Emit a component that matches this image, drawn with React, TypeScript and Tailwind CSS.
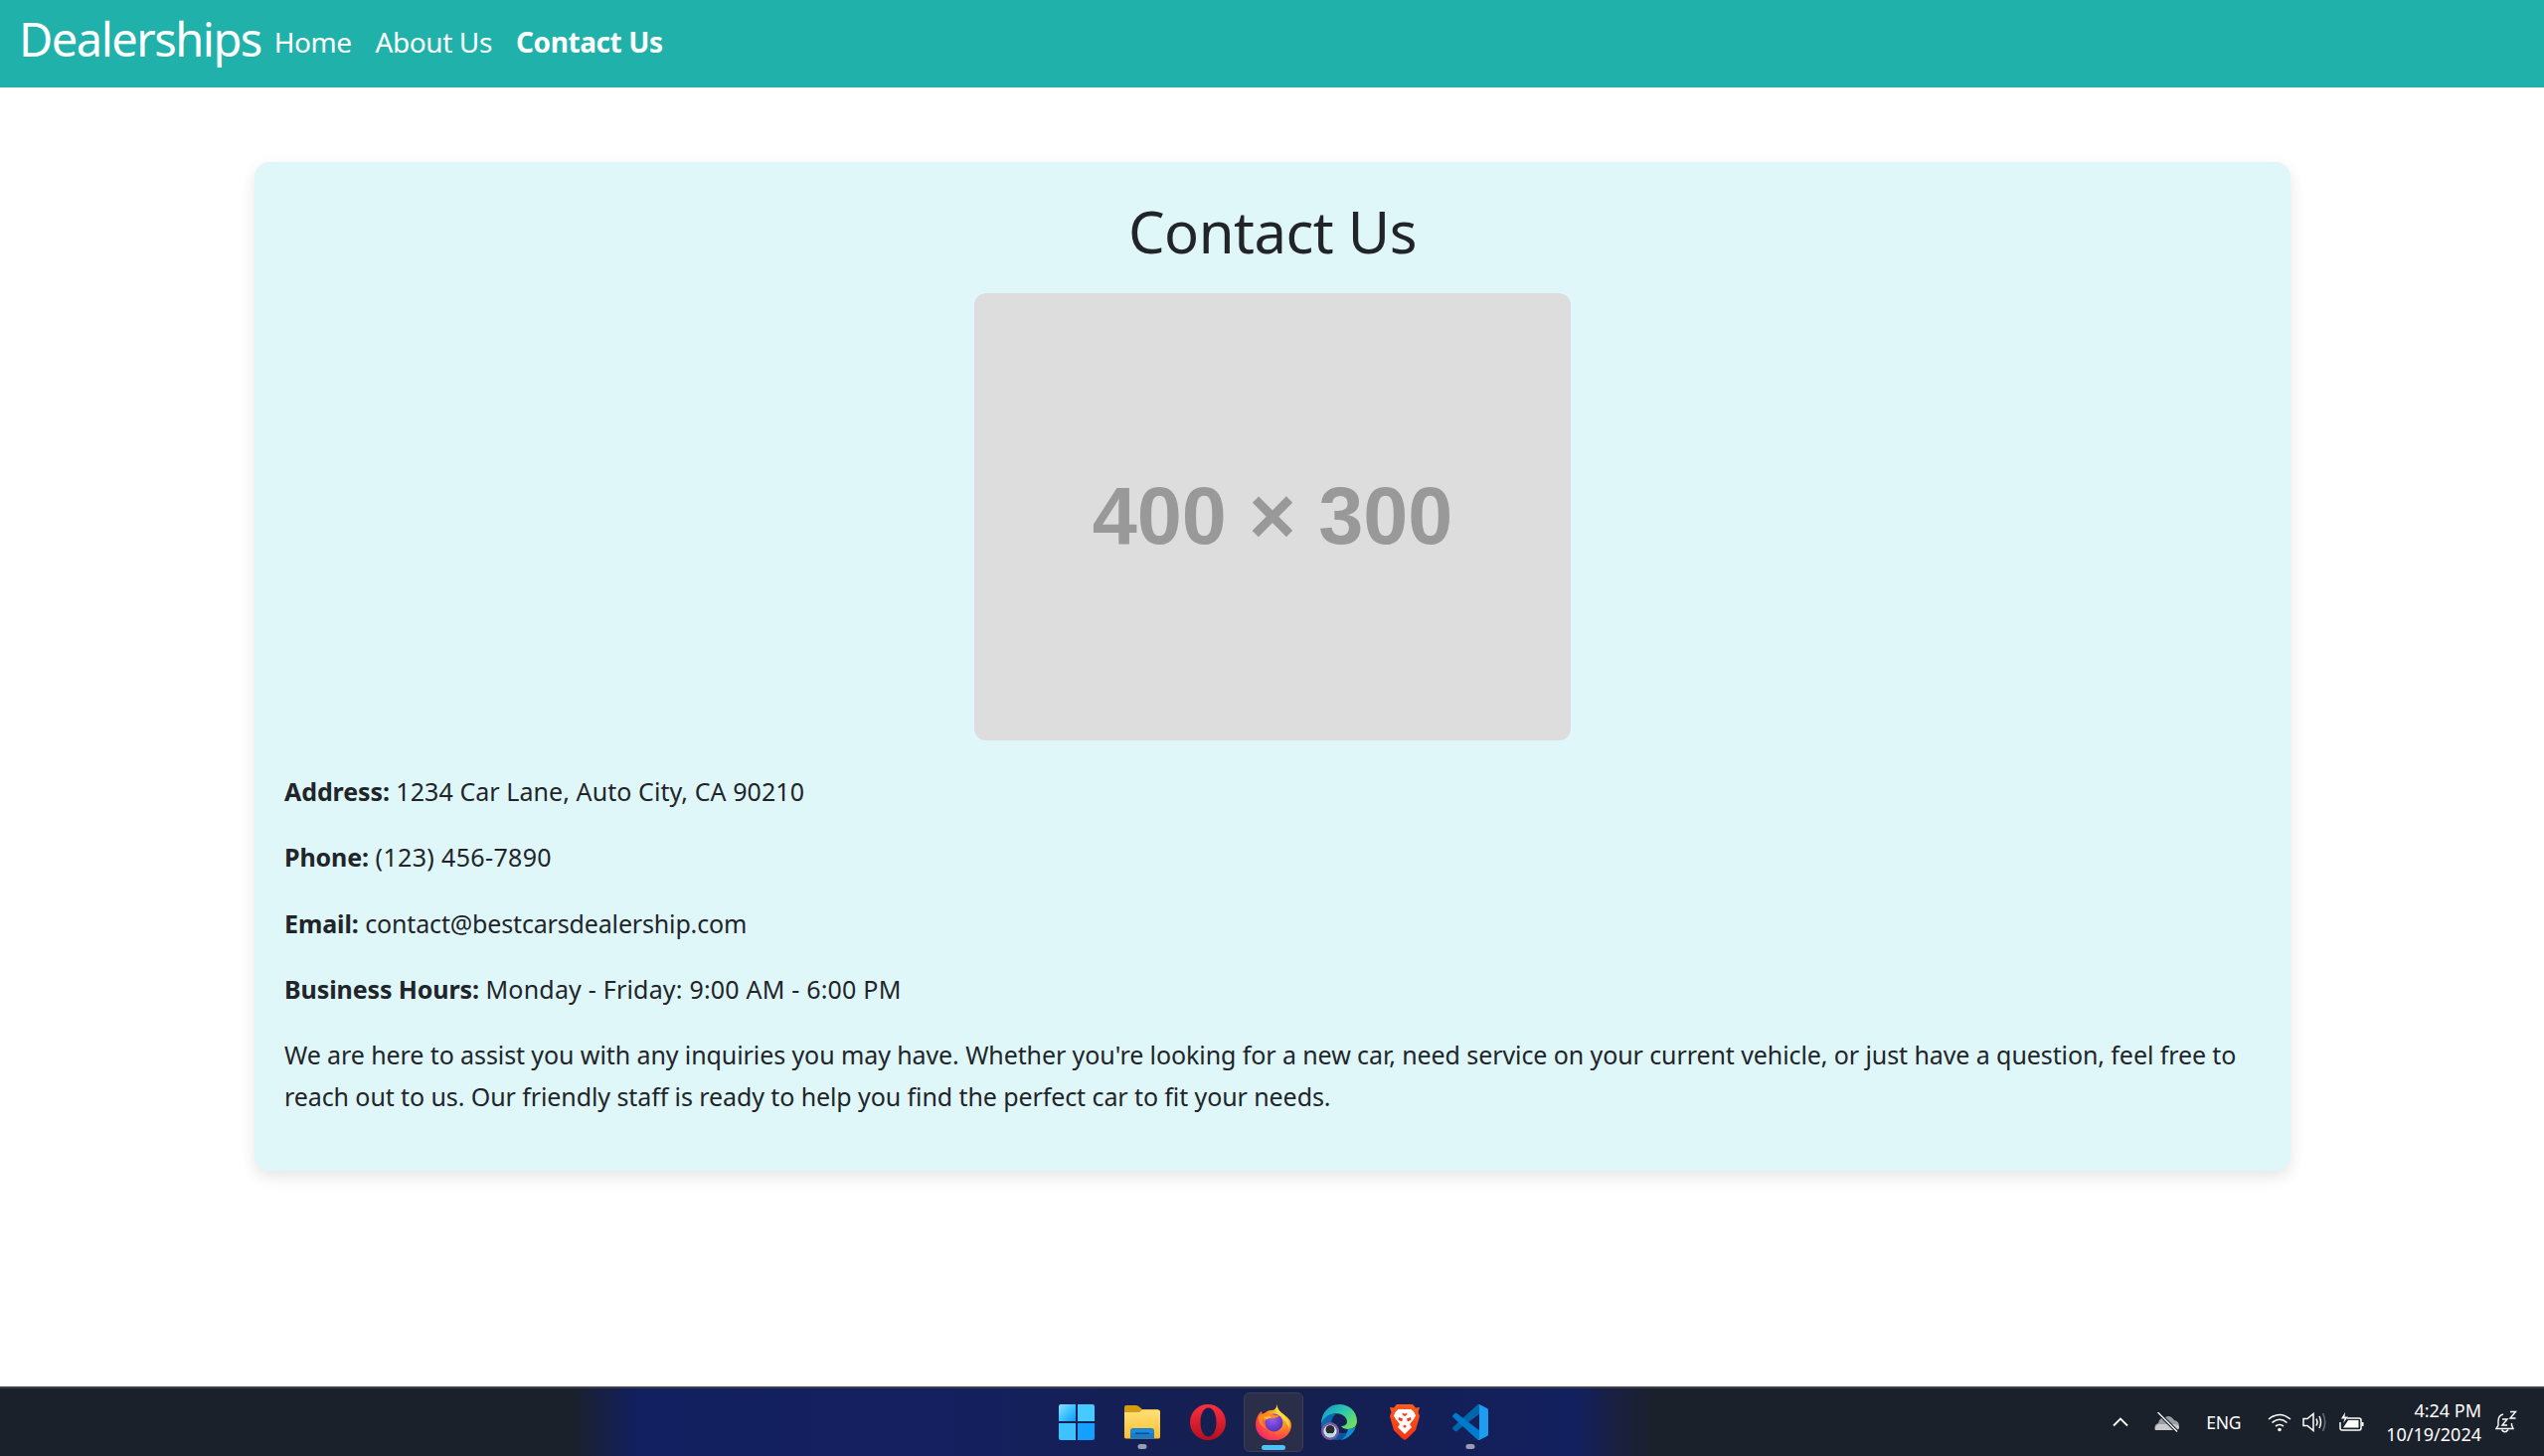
import React from 'react';

const WindowsIcon = () => (
  <svg width="36" height="36" viewBox="0 0 36 36">
    <defs>
      <linearGradient id="win" x1="0" y1="0" x2="1" y2="1">
        <stop offset="0" stopColor="#8fdcff" />
        <stop offset="0.5" stopColor="#3fc4ff" />
        <stop offset="1" stopColor="#0f9bff" />
      </linearGradient>
    </defs>
    <path d="M2 0H17V17H0V2A2 2 0 0 1 2 0Z" fill="url(#win)" />
    <path d="M19 0H34A2 2 0 0 1 36 2V17H19Z" fill="#45cbff" />
    <path d="M0 19H17V36H2A2 2 0 0 1 0 34Z" fill="#3cc3ff" />
    <path d="M19 19H36V34A2 2 0 0 1 34 36H19Z" fill="#14a0ff" />
  </svg>
);

const FolderIcon = () => (
  <svg width="36" height="34" viewBox="0 0 36 34">
    <defs>
      <linearGradient id="fold" x1="0" y1="0" x2="0" y2="1">
        <stop offset="0" stopColor="#ffe07a" />
        <stop offset="1" stopColor="#fcbf2c" />
      </linearGradient>
    </defs>
    <path d="M0 2Q0 0 2 0H12Q13.5 0 15 1.5L18 4H34V9H0Z" fill="#d29e10" />
    <path d="M0 7H15L18 4.500H34Q36 4.500 36 6.500V32Q36 33.500 34 33.500H2Q0 33.500 0 32Z" fill="url(#fold)" />
    <path d="M6 33.500V26Q6 23 9 23H27Q30 23 30 26V33.500Z" fill="#1a7ccd" />
    <path d="M6 33.500V27Q6 24 9 24H27Q30 24 30 27V28H6Z" fill="#1f96e8" opacity="0.6" />
    <rect x="11" y="27.500" width="14" height="1.500" fill="#0b4f8c" />
  </svg>
);

const OperaIcon = () => (
  <svg width="36" height="36" viewBox="0 0 36 36">
    <defs>
      <linearGradient id="op" x1="0" y1="0" x2="0" y2="1">
        <stop offset="0" stopColor="#ff2f3f" />
        <stop offset="1" stopColor="#b40f1e" />
      </linearGradient>
    </defs>
    <path
      fillRule="evenodd"
      d="M18 0A18 18 0 1 1 18 36A18 18 0 1 1 18 0ZM18.500 3.500C13.500 3.500 10.500 10 10.500 18C10.500 26 13.500 32.500 18.500 32.500C23.500 32.500 26.500 26 26.500 18C26.500 10 23.500 3.500 18.500 3.500Z"
      fill="url(#op)"
    />
  </svg>
);

const FirefoxIcon = () => (
  <svg width="36" height="36" viewBox="0 0 36 36">
    <defs>
      <radialGradient id="ff" cx="0.75" cy="0.2" r="1">
        <stop offset="0" stopColor="#ffe14a" />
        <stop offset="0.35" stopColor="#ff9a1f" />
        <stop offset="0.7" stopColor="#ff4a45" />
        <stop offset="1" stopColor="#e3177b" />
      </radialGradient>
      <radialGradient id="fg" cx="0.4" cy="0.3" r="0.8">
        <stop offset="0" stopColor="#9a5cf0" />
        <stop offset="1" stopColor="#4b2bb5" />
      </radialGradient>
    </defs>
    <path d="M22 0C21 4 24 7 28 10C32 13 36 16 36 21A18 15.500 0 0 1 0 21C0 15 2 10 6 7L7 11C9 8 12 6 16 6C19 6 21 4 22 0Z" fill="url(#ff)" />
    <path d="M22 0C21 5 25 8 29 11C33 15 35 19 34 25C32 18 27 13 23 11C20 8 20 4 22 0Z" fill="#ffd83a" />
    <circle cx="18.500" cy="18.500" r="9" fill="url(#fg)" />
    <path d="M3 12C6 9 11 8 16 10C20 11.500 22 10.500 24 12C20 14 17 14.500 13 14C11 16 9 16 7 15C6 18 8 22 11 24C6 23 2 18 3 12Z" fill="#ff8a1c" />
    <path d="M8 13.500L14 11.500L16 13L11 15Z" fill="#ffc23d" />
  </svg>
);

const EdgeIcon = () => (
  <svg width="36" height="36" viewBox="0 0 36 36">
    <defs>
      <linearGradient id="ed" x1="0" y1="0" x2="1" y2="0.7">
        <stop offset="0" stopColor="#0f8fd0" />
        <stop offset="0.55" stopColor="#2fc6b0" />
        <stop offset="1" stopColor="#6fe05f" />
      </linearGradient>
      <linearGradient id="eb" x1="0" y1="0" x2="1" y2="1">
        <stop offset="0" stopColor="#0c6fb8" />
        <stop offset="1" stopColor="#0a4f96" />
      </linearGradient>
    </defs>
    <path d="M18 0C28 0 36 7 36 17C36 22 32 25 27 25C24 25 21 24 20 22C26 22 27 18 25 14C22 9 14 8 8 11C4 13 1 17 0 20C0 9 7 0 18 0Z" fill="url(#ed)" />
    <path d="M0 20C2 13 8 9 15 10C10 13 9 19 12 24C15 29 22 30 27 28C24 33 20 36 16 36C7 36 0 29 0 20Z" fill="url(#eb)" />
    <path d="M27 25C30.500 25 33.500 24 35 22C33 29 27 35 19 36C23 34 26 30 27 25Z" fill="#0f8fd8" />
    <circle cx="9" cy="27" r="9" fill="#7a5aa8" />
    <circle cx="9" cy="27" r="6.500" fill="#d6ecec" />
    <circle cx="9" cy="25.500" r="4.500" fill="#2a2a2e" />
    <path d="M4 30Q9 28 14 30Q12 33 9 33Q6 33 4 30Z" fill="#a8e0e0" />
  </svg>
);

const BraveIcon = () => (
  <svg width="30" height="36" viewBox="0 0 30 36">
    <defs>
      <linearGradient id="br" x1="0" y1="0" x2="0" y2="1">
        <stop offset="0" stopColor="#ff5a1f" />
        <stop offset="1" stopColor="#f5330f" />
      </linearGradient>
    </defs>
    <path d="M7 0H23L26 3.500L30 3L28.500 8L30 12L26 26L18 34L15 36L12 34L4 26L0 12L1.500 8L0 3L4 3.500Z" fill="url(#br)" />
    <path d="M8.500 5H21.500L24.500 8L26 11.500L24 15L20 20L22 23L15 30L8 23L10 20L6 15L4 11.500L5.500 8Z" fill="#fff" />
    <path d="M9 13L13 14.500L12 17.500L8.500 15.500ZM21 13L17 14.500L18 17.500L21.500 15.500Z" fill="#f5330f" />
    <path d="M12.500 8.500L15 9.500L17.500 8.500L17 11L15 12L13 11ZM13 22L15 20.500L17 22L15 24Z" fill="#f5330f" opacity="0.9" />
  </svg>
);

const CodeIcon = () => (
  <svg width="36" height="36" viewBox="0 0 100 100">
    <path
      d="M96.4614 10.7962L75.8569 0.875542C73.4719 -0.272773 70.6217 0.211611 68.75 2.08333L1.29858 63.5832C-0.515693 65.2373 -0.513607 68.0937 1.30308 69.7452L6.81272 74.754C8.29793 76.1042 10.5347 76.2036 12.1338 74.9905L93.3609 13.3699C96.086 11.3026 100 13.2462 100 16.6667V16.4275C100 14.0265 98.6246 11.8378 96.4614 10.7962Z"
      fill="#0065a9"
    />
    <path
      d="M96.4614 89.2038L75.8569 99.1245C73.4719 100.273 70.6217 99.7884 68.75 97.9167L1.29858 36.4169C-0.515693 34.7627 -0.513607 31.9063 1.30308 30.2548L6.81272 25.246C8.29793 23.8958 10.5347 23.7964 12.1338 25.0095L93.3609 86.6301C96.086 88.6974 100 86.7538 100 83.3334V83.5726C100 85.9735 98.6246 88.1622 96.4614 89.2038Z"
      fill="#007acc"
    />
    <path
      d="M75.8578 99.1263C73.4721 100.274 70.6219 99.7885 68.75 97.9166C71.0564 100.223 75 98.5895 75 95.3278V4.67213C75 1.41039 71.0564 -0.223106 68.75 2.08329C70.6219 0.211402 73.4721 -0.273666 75.8578 0.873633L96.4587 10.7807C98.6234 11.8217 100 14.0112 100 16.4132V83.5871C100 85.9891 98.6234 88.1786 96.4586 89.2196L75.8578 99.1263Z"
      fill="#1f9cf0"
    />
  </svg>
);

const Chevron = () => (
  <svg width="16" height="10" viewBox="0 0 16 10" fill="none" stroke="#fff" strokeWidth="1.800">
    <path d="M1 8.500L8 1.500L15 8.500" />
  </svg>
);

const CloudOff = () => (
  <svg width="26" height="20" viewBox="0 0 26 20">
    <path d="M1 18Q-1 13 4 11Q5 5 11 5Q16 2 20 8Q25 9 25 14Q25 18 21 18Z" fill="#9a9ea4" />
    <path d="M1 18Q0 14 4 12H20Q25 13 25 15Q25 18 21 18Z" fill="#c8cace" />
    <path d="M4 0.500L23 19.500" stroke="#1b212b" strokeWidth="3.500" />
    <path d="M3.500 0L23 19.500" stroke="#fff" strokeWidth="1.300" />
  </svg>
);

const Wifi = () => (
  <svg width="24" height="20" viewBox="0 0 24 20" fill="none" stroke="#fff" strokeWidth="1.600">
    <path d="M1 7Q12 -2 23 7" />
    <path d="M4.500 10.500Q12 4 19.500 10.500" />
    <path d="M8 14Q12 11 16 14" />
    <circle cx="12" cy="17.500" r="1.800" fill="#fff" stroke="none" />
  </svg>
);

const Speaker = () => (
  <svg width="24" height="20" viewBox="0 0 24 20" fill="none" stroke="#fff" strokeWidth="1.500">
    <path d="M1 6.500H5L11 1.500V18.500L5 13.500H1Z" />
    <path d="M14 6.500Q16 10 14 13.500" />
    <path d="M17 4Q20 10 17 16" />
    <path d="M20.500 1Q25 10 20.500 19" stroke="#6a6e75" />
  </svg>
);

const Battery = () => (
  <svg width="25" height="20" viewBox="0 0 25 20" fill="none" stroke="#fff" strokeWidth="1.500">
    <path d="M8 6H20Q22 6 22 8V16Q22 18 20 18H3Q1 18 1 16V10" />
    <path d="M9 8H19.500V15.500H4Z" fill="#fff" stroke="none" />
    <path d="M23.500 10V14" strokeWidth="2" />
    <path d="M6 0L2 6.500H5.500L4 11L9 4.500H5.500Z" fill="#fff" stroke="none" />
  </svg>
);

const BellZ = () => (
  <svg width="22" height="24" viewBox="0 0 22 24" fill="none" stroke="#fff" strokeWidth="1.400">
    <path d="M8 4Q3 5 3 11V15L1 18.500H18L16.500 15V13" />
    <path d="M6.500 19.500Q9.500 24 13 19.500" />
    <path d="M7 9H12L7 15H12" />
    <path d="M15 1.500H20.500L15 8H20.500" />
  </svg>
);

const apps = [
  { key: 'win', icon: <WindowsIcon /> },
  { key: 'files', icon: <FolderIcon />, dot: true },
  { key: 'opera', icon: <OperaIcon /> },
  { key: 'firefox', icon: <FirefoxIcon />, active: true },
  { key: 'edge', icon: <EdgeIcon /> },
  { key: 'brave', icon: <BraveIcon /> },
  { key: 'code', icon: <CodeIcon />, dot: true },
];

const details = [
  { label: 'Address:', value: '1234 Car Lane, Auto City, CA 90210', fit: 'tracking-[0.07px]' },
  { label: 'Phone:', value: '(123) 456-7890', fit: 'tracking-[0.35px]' },
  { label: 'Email:', value: 'contact@bestcarsdealership.com', fit: 'tracking-[-0.16px]' },
  { label: 'Business Hours:', value: 'Monday - Friday: 9:00 AM - 6:00 PM', fit: 'tracking-[0.2px]' },
];

export default function App() {
  return (
    <div className="flex h-screen flex-col overflow-hidden bg-white font-['Noto_Sans',sans-serif] text-[#212529]">
      <nav className="flex h-[88px] shrink-0 items-center bg-[#20b2aa] pb-[4px] pl-[19px] text-white">
        <span className="mr-[13px] mb-[6px] text-[47px] leading-none font-normal tracking-[-1.5px]">Dealerships</span>
        <span className="mr-[24px] text-[28px] font-normal tracking-[-0.5px]">Home</span>
        <span className="mr-[24px] text-[28px] font-normal tracking-[-0.4px]">About Us</span>
        <span className="text-[28px] font-bold tracking-[-0.4px]">Contact Us</span>
      </nav>

      <main className="flex-1">
        <div className="mt-[75px] ml-[256px] h-[1015px] w-[2048px] rounded-[15px] bg-[#e0f7fa] px-[30px] pt-[30px] shadow-[0_6px_15px_rgba(0,0,0,0.1)]">
          <h1 className="h-[72px] text-center text-[58px] leading-[80px] font-normal tracking-[-0.5px] text-[#212529]">Contact Us</h1>
          <div className="mx-auto mt-[30px] flex h-[450px] w-[600px] items-center justify-center rounded-[12px] bg-[#dddddd] font-['Liberation_Sans',sans-serif] text-[81px] font-bold text-[#999999]">
            400 × 300
          </div>
          <div className="mt-[30px] text-[25px] leading-[42px]">
            {details.map((d) => (
              <p key={d.label} className="mb-[24.300px]">
                <strong className="font-bold tracking-[-0.1px]">{d.label}</strong> <span className={d.fit}>{d.value}</span>
              </p>
            ))}
            <p className="w-[1985px] tracking-[-0.09px]">
              We are here to assist you with any inquiries you may have. Whether you're looking for a new car, need service on your current vehicle, or just have a question, feel free to reach out to us. Our friendly staff is ready to help you find the perfect car to fit your needs.
            </p>
          </div>
        </div>
      </main>

      <footer className="grid h-[70px] shrink-0 grid-cols-[1fr_auto_1fr] items-center border-t-2 border-[#3b404b] bg-[linear-gradient(90deg,#1b212b_0%,#1b212b_22.500%,#121f60_25%,#14205f_37%,#151f4e_50%,#12205f_62%,#1a2040_63.500%,#1b212b_65%,#1b212b_100%)] text-white">
        <div />
        <div className="ml-[3px] flex gap-[6px]">
          {apps.map((a) => (
            <div
              key={a.key}
              className={
                a.active
                  ? 'relative flex h-[60px] w-[60px] items-center justify-center rounded-[6px] border border-[#3a3f55] bg-[#2a2e48]'
                  : 'relative flex h-[60px] w-[60px] items-center justify-center'
              }
            >
              {a.icon}
              {a.dot && <span className="absolute bottom-[3px] left-1/2 h-[5px] w-[9px] -translate-x-1/2 rounded-full bg-[#9a9db0]" />}
              {a.active && <span className="absolute bottom-[1px] left-1/2 h-[5px] w-[24px] -translate-x-1/2 rounded-full bg-[#4cc2ff]" />}
            </div>
          ))}
        </div>
        <div className="flex items-center justify-end pr-[27px]">
          <Chevron />
          <div className="ml-[26px]"><CloudOff /></div>
          <span className="ml-[26px] text-[17.500px] tracking-[-0.3px]">ENG</span>
          <div className="ml-[27px]"><Wifi /></div>
          <div className="ml-[11px]"><Speaker /></div>
          <div className="ml-[13px]"><Battery /></div>
          <div className="ml-[22px] text-right text-[18px] leading-[24px]">
            <div>4:24 PM</div>
            <div>10/19/2024</div>
          </div>
          <div className="ml-[14px]"><BellZ /></div>
        </div>
      </footer>
    </div>
  );
}
